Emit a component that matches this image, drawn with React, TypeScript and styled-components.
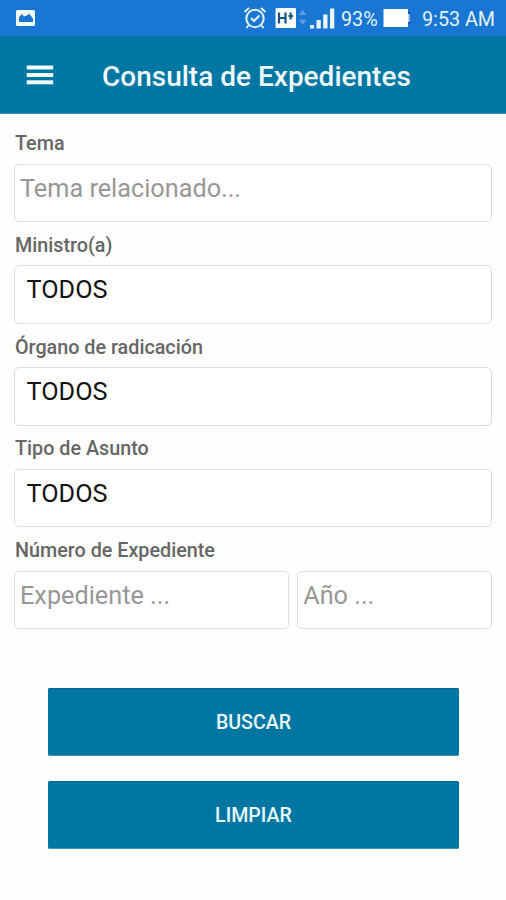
import React from "react";
import styled, { createGlobalStyle } from "styled-components";

const GlobalStyle = createGlobalStyle`
  * { box-sizing: border-box; }
  body { margin: 0; background: #fefefe; font-family: Roboto, "Noto Sans", sans-serif; }
`;

const Screen = styled.div`
  width: 506px;
  height: 900px;
  background: #fefefe;
  overflow: hidden;
`;

const StatusBar = styled.header`
  height: 36px;
  padding: 0 11px 0 15px;
  background: #1976d2;
  color: #e3f3fc;
  display: flex;
  align-items: center;
  justify-content: space-between;
`;

const StatusGroup = styled.div`
  display: flex;
  align-items: center;
`;

const StatusText = styled.span<{ $width: number; $left: number }>`
  width: ${(p) => p.$width}px;
  margin-left: ${(p) => p.$left}px;
  padding-top: 3px;
  font-size: 19.75px;
  line-height: 34px;
  white-space: nowrap;
`;

const Icon = styled.svg<{ $left?: number }>`
  display: block;
  flex: none;
  margin-left: ${(p) => p.$left ?? 0}px;
`;

const AppBar = styled.div`
  height: 78px;
  padding-left: 26px;
  background: #0077a3;
  border-bottom: 1px solid #3b90b1;
  display: flex;
  align-items: center;
`;

const MenuButton = styled.button`
  width: 28px;
  height: 28px;
  padding: 0;
  border: 0;
  background: none;
`;

const Title = styled.h1`
  margin: 4px 0 0 48px;
  color: #eefaff;
  font-size: 28px;
  font-weight: 500;
  line-height: 36px;
  white-space: nowrap;
`;

const Form = styled.main`
  padding: 14px 14px 0;
`;

const Field = styled.div`
  height: 101.75px;
`;

const Label = styled.div`
  height: 35.5px;
  padding: 4px 0 0 1px;
  color: #666;
  font-size: 19.75px;
  font-weight: 500;
  line-height: 24px;
  white-space: nowrap;
`;

const Row = styled.div`
  display: flex;
  gap: 8px;
`;

const Box = styled.div<{ $width?: number; $filled?: boolean }>`
  width: ${(p) => p.$width ?? 478}px;
  height: 58.5px;
  padding: ${(p) => (p.$filled ? "8px 0 0 11.5px" : "8px 0 0 5px")};
  border: 1.5px solid #ddd;
  border-radius: 5px;
  background: #fff;
  color: ${(p) => (p.$filled ? "#141414" : "#979797")};
  font-size: 25.25px;
  line-height: 32px;
  white-space: nowrap;
`;

const Actions = styled.div`
  margin-top: 51px;
  padding: 0 33px 0 34px;
  display: flex;
  flex-direction: column;
  gap: 25px;
`;

const Button = styled.button`
  height: 68px;
  padding: 2px 0 0;
  border: 0;
  border-radius: 2px;
  background: #0077a3;
  box-shadow: inset 0 1px 0 #006a92, inset 0 -1px 0 #3c93b5;
  color: #e8f7fd;
  font: 500 19.6px/24px Roboto, sans-serif;
`;

const PictureIcon = () => (
  <Icon width="20" height="18" viewBox="0 0 20 18">
    <rect x="1" y="1" width="19" height="16" rx="1.5" fill="#f4fbff" />
    <path d="M4 13V8l3-3 2 2.5 4-1.5 1-1.5 4 5V13z" fill="#1976d2" />
  </Icon>
);

const AlarmIcon = () => (
  <Icon width="24" height="24" viewBox="0 0 24 24" fill="none" stroke="#e3f3fc" strokeWidth="2">
    <circle cx="12" cy="12.5" r="8.7" />
    <path d="m8 12 3 3 5.5-5.5M1.5 6 6 2M22.5 6 18 2M5.5 19.5 3.5 22M18.5 19.5l2 2.5" />
  </Icon>
);

const NetworkIcon = () => (
  <Icon $left={8} width="32" height="22" viewBox="0 0 32 22">
    <rect x="0.5" y="1" width="20.5" height="20" rx="1" fill="#f8fcff" />
    <path d="M4 5.5v11M10.5 5.5v11M4 11h6.500" stroke="#16547f" strokeWidth="2.2" />
    <path d="M13.5 9H18M15.7 5.5v7" stroke="#16547f" strokeWidth="2" />
    <path d="m24 8 3.7-5.5L31.4 8zM24 12.5h7.400L27.7 18z" fill="#5b9ce8" />
  </Icon>
);

const SignalIcon = () => (
  <Icon $left={3} width="26" height="22" viewBox="0 0 26 22" fill="#eef8ff">
    <rect x="0" y="18" width="4" height="3.5" />
    <rect x="6.5" y="13" width="4.3" height="8.5" />
    <rect x="13.2" y="7.5" width="4.3" height="14" />
    <rect x="20" y="1.5" width="4.3" height="20" />
  </Icon>
);

const BatteryIcon = () => (
  <Icon $left={3} width="28" height="20" viewBox="0 0 28 20">
    <path d="M0.5 1H25V6H27V14H25V19H0.5z" fill="#fff" />
    <path d="M26.2 6v8" stroke="#8da9e0" strokeWidth="1.5" />
    <path d="M25.7 4.8h1.8M25.7 14.5h1.8" stroke="#123d92" strokeWidth="1.5" />
  </Icon>
);

export default function App() {
  return (
    <>
      <GlobalStyle />
      <Screen>
        <StatusBar>
          <PictureIcon />
          <StatusGroup>
            <AlarmIcon />
            <NetworkIcon />
            <SignalIcon />
            <StatusText $left={5} $width={39}>93%</StatusText>
            <BatteryIcon />
            <StatusText $left={11} $width={73}>9:53 AM</StatusText>
          </StatusGroup>
        </StatusBar>
        <AppBar>
          <MenuButton aria-label="Menú">
            <Icon width="28" height="28" viewBox="0 0 28 28" fill="#f0fbff">
              <rect x="0.7" y="4.5" width="26.5" height="4" />
              <rect x="0.7" y="12" width="26.5" height="4" />
              <rect x="0.7" y="19.3" width="26.5" height="4" />
            </Icon>
          </MenuButton>
          <Title>Consulta de Expedientes</Title>
        </AppBar>
        <Form>
          <Field>
            <Label>Tema</Label>
            <Box>Tema relacionado...</Box>
          </Field>
          {["Ministro(a)", "Órgano de radicación", "Tipo de Asunto"].map((label) => (
            <Field key={label}>
              <Label>{label}</Label>
              <Box $filled>TODOS</Box>
            </Field>
          ))}
          <Field>
            <Label>Número de Expediente</Label>
            <Row>
              <Box $width={275.5}>Expediente ...</Box>
              <Box $width={195}>Año ...</Box>
            </Row>
          </Field>
          <Actions>
            <Button>BUSCAR</Button>
            <Button>LIMPIAR</Button>
          </Actions>
        </Form>
      </Screen>
    </>
  );
}
